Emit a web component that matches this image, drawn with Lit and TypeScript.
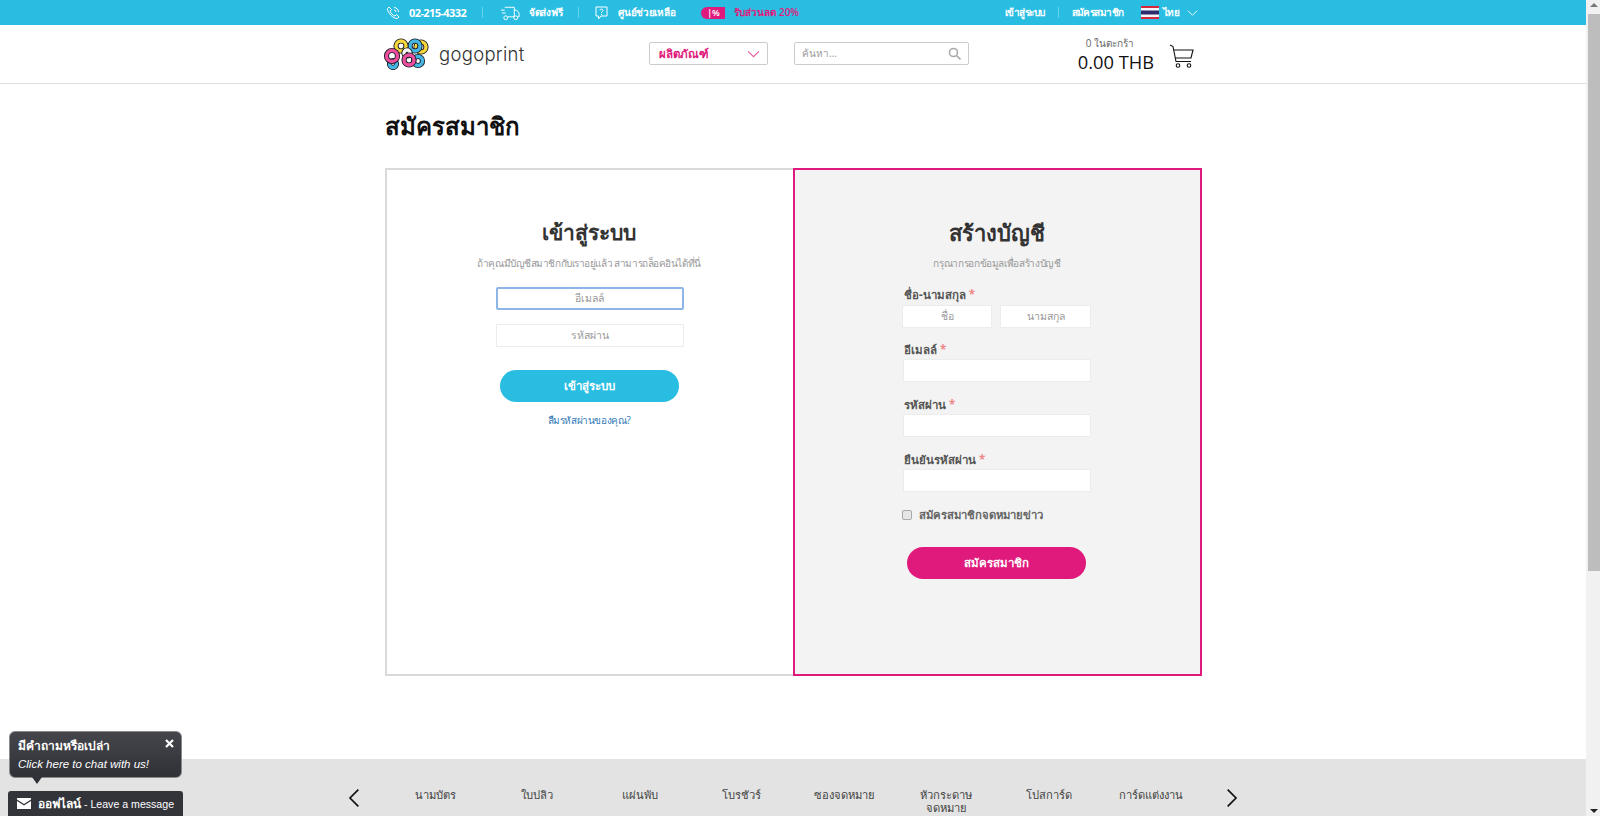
import { LitElement, css, html, svg } from "lit";
import { customElement } from "lit/decorators.js";

const FOOTER_ITEMS = [
  "นามบัตร",
  "ใบปลิว",
  "แผ่นพับ",
  "โบรชัวร์",
  "ซองจดหมาย",
  "หัวกระดาษ\nจดหมาย",
  "โปสการ์ด",
  "การ์ดแต่งงาน",
];

const chevron = (cls: string, points: string) => html`
  <svg class=${cls} viewBox="0 0 12 12" fill="none" stroke="currentColor" stroke-width="1">
    <polyline points=${points}></polyline>
  </svg>
`;

// one ring of the logo: black outline with the coloured band on top
const ring = (cx: number, cy: number, r: number, color: string) => svg`
  <circle cx=${cx} cy=${cy} r=${r} fill="none" stroke="#1c1c24" stroke-width="5.2"></circle>
  <circle cx=${cx} cy=${cy} r=${r} fill="none" stroke=${color} stroke-width="3.4"></circle>
`;

@customElement("app-root")
export class AppRoot extends LitElement {
  static styles = css`
    :host {
      display: flex;
      width: 1600px;
      height: 816px;
      overflow: hidden;
      font-family: "Open Sans", "Noto Sans", "DejaVu Sans", sans-serif;
      font-size: 12px;
      color: #333;
      background: #fff;
    }

    .page {
      position: relative;
      flex: 1;
      min-width: 0;
      display: flex;
      flex-direction: column;
    }

    .wrap {
      width: 816px;
      margin-inline: auto;
    }

    /* top bar */
    .topbar {
      height: 25px;
      flex: none;
      background: #29bde2;
      color: #fff;
      font-size: 10px;
      font-weight: 600;
      letter-spacing: -0.3px;
    }
    .topbar .wrap {
      height: 100%;
      display: flex;
      align-items: center;
    }
    .topbar svg {
      display: block;
      flex: none;
    }
    .phone-ico {
      width: 14px;
      height: 14px;
      margin: 0 9px 0 1px;
    }
    .phone {
      font-size: 11px;
      font-weight: 700;
      letter-spacing: -0.6px;
    }
    .sep {
      width: 1px;
      height: 11px;
      margin-inline: 16px;
      background: rgba(255, 255, 255, 0.3);
      flex: none;
    }
    .phone + .sep {
      margin-right: 17px;
    }
    .truck-ico {
      width: 20px;
      height: 16px;
      margin-right: 9px;
    }
    .help-ico {
      width: 13px;
      height: 14px;
      margin-right: 10px;
    }
    .badge {
      width: 24px;
      height: 12px;
      margin-left: 26px;
      margin-right: 9px;
      background: #e01a7c;
      border-radius: 6px 0 0 6px;
      font-size: 9px;
      line-height: 12px;
      text-align: center;
      flex: none;
    }
    .promo {
      color: #e01a7c;
      letter-spacing: 0;
    }
    .top-right {
      margin-left: auto;
      display: flex;
      align-items: center;
      letter-spacing: -0.55px;
    }
    .top-right .sep {
      margin-inline: 13px;
    }
    .flag {
      width: 18px;
      height: 13px;
      margin-left: 17px;
      margin-right: 4px;
    }
    .lang-chev {
      width: 11px;
      height: 11px;
      margin-left: 8px;
      margin-right: 3px;
    }

    /* header */
    .header {
      height: 58px;
      flex: none;
      border-bottom: 1px solid #dedede;
    }
    .header .wrap {
      height: 100%;
      display: flex;
      align-items: center;
    }
    .logo {
      width: 46px;
      height: 32px;
      margin-left: -2px;
      flex: none;
    }
    .wordmark {
      margin-left: 10px;
      width: 210px;
      font-family: Inter, sans-serif;
      font-size: 18.5px;
      font-weight: 300;
      letter-spacing: 0.3px;
      color: #333;
    }
    .select,
    .search {
      height: 23px;
      margin-top: -1px;
      box-sizing: border-box;
      display: flex;
      align-items: center;
      border: 1px solid #ccc;
      border-radius: 2px;
      flex: none;
    }
    .select {
      width: 119px;
      padding: 0 7px 0 9px;
      justify-content: space-between;
      color: #e01a7c;
      font-weight: 700;
      font-size: 11.5px;
    }
    .select svg {
      width: 13px;
      height: 13px;
      opacity: 0.7;
    }
    .search {
      width: 175px;
      margin-left: 26px;
      padding: 0 7px;
      justify-content: space-between;
      color: #999;
      font-size: 10px;
    }
    .search svg {
      width: 13px;
      height: 13px;
    }
    .cart {
      margin-left: auto;
      display: flex;
      align-items: center;
      margin-right: 7px;
    }
    .cart-text {
      display: flex;
      flex-direction: column;
      margin-right: 15px;
    }
    .cart-count {
      margin-left: 8px;
      font-size: 10px;
      line-height: 15px;
      color: #666;
    }
    .cart-total {
      font-size: 18.3px;
      line-height: 22px;
      color: #111;
    }
    .cart svg {
      width: 25px;
      height: 25px;
      margin-top: 4px;
    }

    /* content */
    .main {
      flex: 1;
    }
    h1 {
      margin: 26px 0 0;
      height: 58px;
      font-size: 24px;
      line-height: 32px;
      font-weight: 700;
      color: #111;
    }
    .panels {
      display: grid;
      grid-template-columns: 408px 409px;
      height: 508px;
    }
    .panel {
      box-sizing: border-box;
      display: flex;
      flex-direction: column;
      align-items: center;
      padding-top: 47px;
    }
    .panel.login {
      padding-right: 2px;
      border: 2px solid #d9d9d9;
      border-right: none;
    }
    .panel.signup {
      padding-right: 1px;
      border: 2px solid #e01a7c;
      background: #f3f3f3;
    }
    h2 {
      margin: 0;
      font-size: 22px;
      line-height: 30px;
      font-weight: 700;
      color: #333;
    }
    .login h2 {
      font-size: 21px;
    }
    .sub {
      margin: 8px 0 0;
      font-size: 10px;
      letter-spacing: -0.36px;
      line-height: 16px;
      color: #999;
    }
    .login .sub {
      letter-spacing: -0.44px;
    }
    .input {
      box-sizing: border-box;
      height: 23px;
      background: #fff;
      border: 1px solid #ececec;
      color: #999;
      font-size: 10.5px;
      line-height: 21px;
      text-align: center;
    }
    .login .input {
      width: 188px;
      margin-left: 1px;
    }
    .login .input.focus {
      margin-top: 16px;
      border: 2px solid #8db5e8;
      border-radius: 2px;
      line-height: 19px;
    }
    .login .input + .input {
      margin-top: 14px;
    }
    .btn {
      width: 179px;
      height: 32px;
      border-radius: 16px;
      color: #fff;
      font-size: 11.5px;
      font-weight: 700;
      line-height: 32px;
      text-align: center;
    }
    .login .btn {
      margin-top: 23px;
      background: #29bde2;
    }
    .forgot {
      margin-top: 10px;
      font-size: 10px;
      letter-spacing: -0.4px;
      line-height: 16px;
      color: #337ab7;
    }
    .form {
      width: 188px;
      margin-top: 15px;
      display: flex;
      flex-direction: column;
      align-items: stretch;
    }
    label {
      display: block;
      padding: 1px 0 0 1px;
      font-size: 11.5px;
      font-weight: 700;
      line-height: 15px;
      color: #555;
    }
    .req {
      color: #e88;
    }
    .form .input {
      margin: 2px 0 14px;
    }
    .names {
      display: grid;
      grid-template-columns: 90px 91px;
      gap: 8px;
      margin: 3px 0 0 -1px;
    }
    .names .input {
      margin: 0 0 13px;
    }
    .news {
      display: flex;
      align-items: center;
      gap: 7px;
      margin-left: -1px;
      font-size: 11.3px;
      font-weight: 600;
      color: #666;
    }
    .box {
      box-sizing: border-box;
      width: 10px;
      height: 10px;
      background: #e6e6e6;
      border: 1px solid #aaa;
      border-radius: 2px;
    }
    .signup .btn {
      margin: 23px 0 0 4px;
      background: #e01a7c;
    }

    /* footer strip */
    .strip {
      height: 57px;
      flex: none;
      background: #e3e3e3;
      display: flex;
      justify-content: center;
      color: #444;
      font-size: 11.2px;
    }
    .strip svg {
      width: 20px;
      height: 20px;
      margin-top: 29px;
      flex: none;
      color: #111;
    }
    .items {
      width: 818px;
      margin-inline: 19px;
      display: grid;
      grid-template-columns: repeat(8, 1fr);
      padding-top: 29px;
      line-height: 13px;
      text-align: center;
      white-space: pre-line;
    }

    /* chat widget sits over the page */
    .chat {
      position: absolute;
      left: 9px;
      top: 731px;
      width: 173px;
      color: #fff;
    }
    .bubble {
      position: relative;
      box-sizing: border-box;
      height: 47px;
      padding: 5px 8px;
      background: linear-gradient(#45464c, #303136);
      border: 1px solid #8a8a8a;
      border-radius: 6px;
      font-size: 12px;
      line-height: 18px;
    }
    .bubble b {
      display: block;
    }
    .bubble i {
      display: block;
      font-family: "Liberation Sans", sans-serif;
      font-size: 11.5px;
    }
    .bubble::after {
      content: "";
      position: absolute;
      left: 22px;
      bottom: -7px;
      border: 5px solid transparent;
      border-bottom: none;
      border-top: 7px solid #303136;
    }
    .close {
      position: absolute;
      right: 7px;
      top: 7px;
      width: 9px;
      height: 9px;
    }
    .bar {
      margin: 13px -1px 0 -1px;
      height: 25px;
      padding-left: 9px;
      display: flex;
      align-items: center;
      gap: 7px;
      background: #33343a;
      border-radius: 3px 3px 0 0;
      font-size: 10.6px;
      font-family: "Liberation Sans", sans-serif;
    }
    .bar b {
      font-family: "Open Sans", "Noto Sans", sans-serif;
      font-size: 12px;
    }
    .bar svg {
      width: 14px;
      height: 11px;
    }

    /* painted scrollbar */
    .scrollbar {
      position: relative;
      width: 14px;
      flex: none;
      background: #f1f1f1;
    }
    .thumb {
      position: absolute;
      left: 2px;
      right: 0;
      top: 14px;
      height: 557px;
      background: #bdbdbd;
    }
    .arrow {
      position: absolute;
      left: 4px;
      width: 0;
      height: 0;
      border: 4px solid transparent;
    }
    .arrow.up {
      top: 3px;
      border-top: none;
      border-bottom: 4px solid #777;
    }
    .arrow.down {
      bottom: 3px;
      border-bottom: none;
      border-top: 4px solid #222;
    }
  `;

  renderLogo() {
    return html`
      <svg class="logo" viewBox="0 0 46 32">
        ${ring(10, 26, 3.5, "#45b6e3")}
        ${ring(35, 23, 4.5, "#45b6e3")}
        ${ring(38, 9, 5, "#f5d63d")}
        ${ring(32, 8, 5, "#45b6e3")}
        ${ring(18, 8, 5, "#f5d63d")}
        ${ring(24, 15, 3, "#f7f7f7")}
        ${ring(9, 18, 5.5, "#ec4f9e")}
        ${ring(26, 22, 5, "#ec4f9e")}
      </svg>
    `;
  }

  renderTopbar() {
    return html`
      <div class="topbar">
        <div class="wrap">
          <svg class="phone-ico" viewBox="0 0 14 14" fill="none" stroke="#fff" stroke-width="1">
            <path d="M3 1 1.5 2.5C1 6 7 13 11.5 12.5L13 11 10.500 8.500 9 10C7 9.500 4.500 7 4 5L5.500 3.500Z"></path>
            <path d="M8 1.500A4.500 4.500 0 0 1 12.500 6M8 4A2 2 0 0 1 10 6"></path>
          </svg>
          <span class="phone">02-215-4332</span>
          <span class="sep"></span>
          <svg class="truck-ico" viewBox="0 0 21 16" fill="none" stroke="#fff" stroke-width="1">
            <path d="M5 2H15V12H8M15 5H17.500L20 8V12H18.500M1 5H5M2 8H6"></path>
            <circle cx="6" cy="13" r="2"></circle>
            <circle cx="16.500" cy="13" r="2"></circle>
          </svg>
          <span>จัดส่งฟรี</span>
          <span class="sep"></span>
          <svg class="help-ico" viewBox="0 0 13 14" fill="none" stroke="#fff" stroke-width="1">
            <path d="M1 1H12V10H6L3.500 13V10H1Z"></path>
            <path d="M5 4.500C5 2.500 8 2.500 8 4.500 8 5.500 6.500 5.500 6.500 7M6.500 8V9"></path>
          </svg>
          <span>ศูนย์ช่วยเหลือ</span>
          <span class="badge">|%</span>
          <span class="promo">รับส่วนลด 20%</span>
          <div class="top-right">
            <span>เข้าสู่ระบบ</span>
            <span class="sep"></span>
            <span>สมัครสมาชิก</span>
            <svg class="flag" viewBox="0 0 18 13">
              <rect width="18" height="13" fill="#f4f5f8"></rect>
              <rect width="18" height="2" fill="#d8263c"></rect>
              <rect y="11" width="18" height="2" fill="#d8263c"></rect>
              <rect y="4.500" width="18" height="4" fill="#2d2a6e"></rect>
            </svg>
            <span>ไทย</span>
            ${chevron("lang-chev", "1,4 6,9 11,4")}
          </div>
        </div>
      </div>
    `;
  }

  renderHeader() {
    return html`
      <div class="header">
        <div class="wrap">
          ${this.renderLogo()}
          <span class="wordmark">gogoprint</span>
          <div class="select">
            <span>ผลิตภัณฑ์</span>
            ${chevron("", "1,4 6,9 11,4")}
          </div>
          <div class="search">
            <span>ค้นหา...</span>
            <svg viewBox="0 0 13 13" fill="none" stroke="#aaa" stroke-width="1.600">
              <circle cx="5.500" cy="5.500" r="4"></circle>
              <path d="M8.500 8.500 12.500 12.500"></path>
            </svg>
          </div>
          <div class="cart">
            <div class="cart-text">
              <span class="cart-count">0 ในตะกร้า</span>
              <span class="cart-total">0.00 THB</span>
            </div>
            <svg viewBox="0 0 25 25" fill="none" stroke="#111" stroke-width="1.100">
              <path d="M1 1 4 2.500 7 17.500H22"></path>
              <path d="M4.500 6H24L22 14H6"></path>
              <circle cx="9" cy="21.500" r="1.800"></circle>
              <circle cx="20" cy="21.500" r="1.800"></circle>
            </svg>
          </div>
        </div>
      </div>
    `;
  }

  renderLogin() {
    return html`
      <section class="panel login">
        <h2>เข้าสู่ระบบ</h2>
        <p class="sub">ถ้าคุณมีบัญชีสมาชิกกับเราอยู่แล้ว สามารถล็อคอินได้ที่นี่</p>
        <div class="input focus">อีเมลล์</div>
        <div class="input">รหัสผ่าน</div>
        <div class="btn">เข้าสู่ระบบ</div>
        <div class="forgot">ลืมรหัสผ่านของคุณ?</div>
      </section>
    `;
  }

  renderSignup() {
    return html`
      <section class="panel signup">
        <h2>สร้างบัญชี</h2>
        <p class="sub">กรุณากรอกข้อมูลเพื่อสร้างบัญชี</p>
        <div class="form">
          <label>ชื่อ-นามสกุล <span class="req">*</span></label>
          <div class="names">
            <div class="input">ชื่อ</div>
            <div class="input">นามสกุล</div>
          </div>
          <label>อีเมลล์ <span class="req">*</span></label>
          <div class="input"></div>
          <label>รหัสผ่าน <span class="req">*</span></label>
          <div class="input"></div>
          <label>ยืนยันรหัสผ่าน <span class="req">*</span></label>
          <div class="input"></div>
          <div class="news">
            <span class="box"></span>
            <span>สมัครสมาชิกจดหมายข่าว</span>
          </div>
          <div class="btn">สมัครสมาชิก</div>
        </div>
      </section>
    `;
  }

  render() {
    return html`
      <div class="page">
        ${this.renderTopbar()} ${this.renderHeader()}
        <div class="main">
          <div class="wrap">
            <h1>สมัครสมาชิก</h1>
            <div class="panels">${this.renderLogin()} ${this.renderSignup()}</div>
          </div>
        </div>
        <div class="strip">
          ${chevron("", "8,1 3,6 8,11")}
          <div class="items">${FOOTER_ITEMS.map((item) => html`<span>${item}</span>`)}</div>
          ${chevron("", "4,1 9,6 4,11")}
        </div>
        <div class="chat">
          <div class="bubble">
            <b>มีคำถามหรือเปล่า</b>
            <i>Click here to chat with us!</i>
            <svg class="close" viewBox="0 0 9 9" stroke="#fff" stroke-width="2.200">
              <path d="M1 1 8 8M8 1 1 8"></path>
            </svg>
          </div>
          <div class="bar">
            <svg viewBox="0 0 14 11">
              <path fill="#fff" d="M0 1.500V0H14V1.500L7 6ZM0 3 7 7.500 14 3V11H0Z"></path>
            </svg>
            <span><b>ออฟไลน์</b> - Leave a message</span>
          </div>
        </div>
      </div>
      <div class="scrollbar">
        <span class="arrow up"></span>
        <span class="thumb"></span>
        <span class="arrow down"></span>
      </div>
    `;
  }
}
